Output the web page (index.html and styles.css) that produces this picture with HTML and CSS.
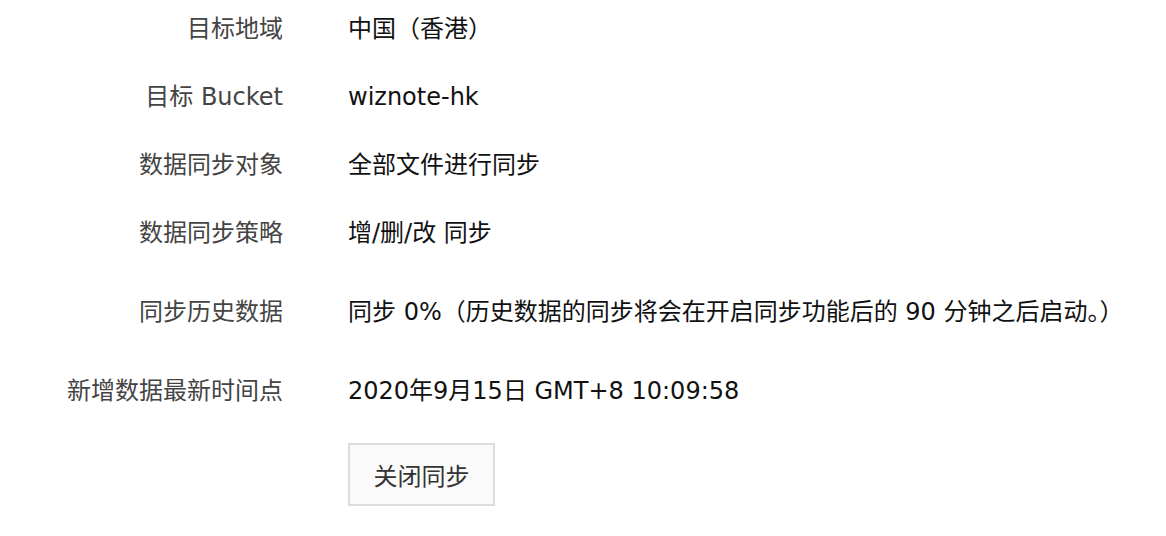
FILE: index.html
```html
<!DOCTYPE html>
<html lang="zh-CN">
<head>
<meta charset="utf-8">
<link rel="stylesheet" href="styles.css">
</head>
<body>
<div class="info">
  <div class="row">
    <div class="label">目标地域</div>
    <div class="value">中国（香港）</div>
  </div>
  <div class="row">
    <div class="label">目标 Bucket</div>
    <div class="value">wiznote-hk</div>
  </div>
  <div class="row">
    <div class="label">数据同步对象</div>
    <div class="value">全部文件进行同步</div>
  </div>
  <div class="row">
    <div class="label">数据同步策略</div>
    <div class="value">增/删/改 同步</div>
  </div>
  <div class="row row--spaced">
    <div class="label">同步历史数据</div>
    <div class="value">同步 0%（历史数据的同步将会在开启同步功能后的 90 分钟之后启动。）</div>
  </div>
  <div class="row row--spaced">
    <div class="label">新增数据最新时间点</div>
    <div class="value">2020年9月15日 GMT+8 10:09:58</div>
  </div>
  <div class="row row--action">
    <div class="label"></div>
    <div class="value"><button class="btn" type="button">关闭同步</button></div>
  </div>
</div>
</body>
</html>
```

FILE: styles.css
```css
html, body {
  margin: 0;
  padding: 0;
  background: #fff;
}
body {
  font-family: "DejaVu Sans", "Noto Sans CJK SC", sans-serif;
  font-size: 24px;
  color: #000;
}
.info {
  display: flex;
  flex-direction: column;
  gap: 34px;
  padding-top: 12px;
}
.row {
  display: grid;
  grid-template-columns: 283px 1fr;
  column-gap: 65px;
  line-height: 34px;
}
.row--spaced {
  margin-top: 11px;
}
.row--action {
  margin-top: 1px;
}
.label {
  text-align: right;
  color: #444;
  white-space: nowrap;
}
.value {
  color: #111;
  white-space: nowrap;
}
.btn {
  width: 147px;
  height: 63px;
  background: #fafafa;
  border: 2px solid #ddd;
  font-family: inherit;
  font-size: 24px;
  color: #333;
  padding: 0;
  cursor: pointer;
}
```
